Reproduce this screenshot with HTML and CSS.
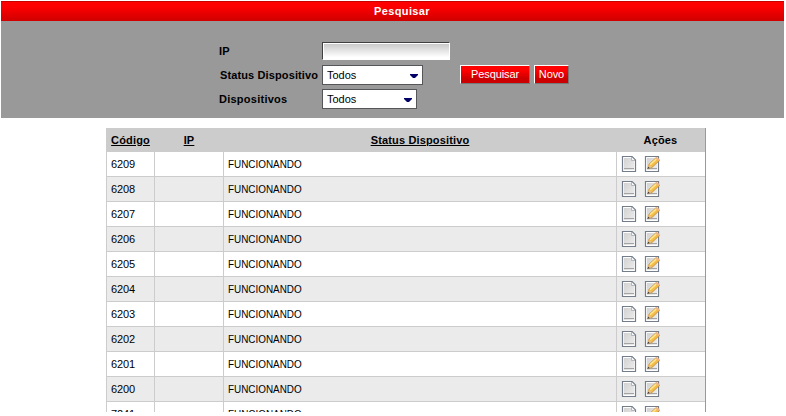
FILE: index.html
```
<!DOCTYPE html>
<html lang="pt-BR">
<head>
<meta charset="utf-8">
<title>Pesquisar</title>
<link rel="stylesheet" href="styles.css">
</head>
<body>
<svg class="defs" width="0" height="0">
  <defs>
    <linearGradient id="paper" x1="0" y1="0" x2="1" y2="1"><stop offset="0" stop-color="#d2d2d2"/><stop offset="1" stop-color="#ececec"/></linearGradient>
    <symbol id="page" viewBox="0 0 16 16">
      <path d="M1.500.500h9.500l3.500 3.500v11.500h-13z" fill="#fff" stroke="#747e8b" stroke-width="1.200"/>
      <path d="M3 2h7l3 3v9H3z" fill="url(#paper)"/>
      <path d="M10.500 1v3.500h3.500" fill="#f4f4f4" stroke="#a5abb3" stroke-width=".8"/>
      <path d="M3 12.500h10" stroke="#a4a4a4"/>
    </symbol>
    <symbol id="edit" viewBox="0 0 16 16">
      <path d="M1.500.500h13v15h-13z" fill="#fff" stroke="#747e8b" stroke-width="1.200"/>
      <path d="M3 2h10v12H3z" fill="url(#paper)"/>
      <path d="M3 12.500h10" stroke="#a4a4a4"/>
      <path d="M3.800 12.500l1.200-4.300 7.200-6.700 3.300 2.900-7.500 7z" fill="#f3bd48" stroke="#c98c35" stroke-width=".8"/>
      <path d="M6 8.800l6.700-6.200" stroke="#ffe993" stroke-width="1.500"/>
      <path d="M11.200 2.400l1.700-1.500 2.900 2.600-1.700 1.600z" fill="#f0b489"/>
      <path d="M3.800 12.500l1.100-3.700 2.700 2.500z" fill="#e4c594"/>
      <path d="M3.600 12.700l.6-2 1.500 1.300z" fill="#333"/>
    </symbol>
  </defs>
</svg>
<div class="page">
  <section class="panel">
    <h1 class="title">Pesquisar</h1>
    <form class="form">
      <div class="fields">
        <label>IP</label><span class="input"></span>
        <label class="status-label">Status Dispositivo</label><span class="select">Todos<i></i></span>
        <label>Dispositivos</label><span class="select short">Todos<i></i></span>
      </div>
      <div class="buttons"><button type="button" class="search">Pesquisar</button><button type="button" class="new">Novo</button></div>
    </form>
  </section>
  <table class="grid">
    <colgroup><col class="c-code"><col class="c-ip"><col class="c-status"><col class="c-actions"></colgroup>
    <thead><tr><th><u>Código</u></th><th><u>IP</u></th><th><u>Status Dispositivo</u></th><th>Ações</th></tr></thead>
    <tbody>
      <tr><td>6209</td><td></td><td><span class="st">FUNCIONANDO</span></td><td class="act"><svg><use href="#page"/></svg><svg><use href="#edit"/></svg></td></tr>
      <tr><td>6208</td><td></td><td><span class="st">FUNCIONANDO</span></td><td class="act"><svg><use href="#page"/></svg><svg><use href="#edit"/></svg></td></tr>
      <tr><td>6207</td><td></td><td><span class="st">FUNCIONANDO</span></td><td class="act"><svg><use href="#page"/></svg><svg><use href="#edit"/></svg></td></tr>
      <tr><td>6206</td><td></td><td><span class="st">FUNCIONANDO</span></td><td class="act"><svg><use href="#page"/></svg><svg><use href="#edit"/></svg></td></tr>
      <tr><td>6205</td><td></td><td><span class="st">FUNCIONANDO</span></td><td class="act"><svg><use href="#page"/></svg><svg><use href="#edit"/></svg></td></tr>
      <tr><td>6204</td><td></td><td><span class="st">FUNCIONANDO</span></td><td class="act"><svg><use href="#page"/></svg><svg><use href="#edit"/></svg></td></tr>
      <tr><td>6203</td><td></td><td><span class="st">FUNCIONANDO</span></td><td class="act"><svg><use href="#page"/></svg><svg><use href="#edit"/></svg></td></tr>
      <tr><td>6202</td><td></td><td><span class="st">FUNCIONANDO</span></td><td class="act"><svg><use href="#page"/></svg><svg><use href="#edit"/></svg></td></tr>
      <tr><td>6201</td><td></td><td><span class="st">FUNCIONANDO</span></td><td class="act"><svg><use href="#page"/></svg><svg><use href="#edit"/></svg></td></tr>
      <tr><td>6200</td><td></td><td><span class="st">FUNCIONANDO</span></td><td class="act"><svg><use href="#page"/></svg><svg><use href="#edit"/></svg></td></tr>
      <tr><td>7241</td><td></td><td><span class="st">FUNCIONANDO</span></td><td class="act"><svg><use href="#page"/></svg><svg><use href="#edit"/></svg></td></tr>
    </tbody>
  </table>
</div>
</body>
</html>
```
FILE: styles.css
```
* { box-sizing: border-box; }
html, body { margin: 0; height: 416px; overflow: hidden; background: #fff; }
body { font: 11px/13px "Liberation Sans", Arial, sans-serif; color: #000; }
.defs { position: absolute; }
.page { height: 412px; padding: 1px 2px 0 1px; overflow: hidden; }
.panel { height: 117px; background: #999; }
.title {
  margin: 0; height: 20px; padding-left: 19px;
  font-size: 11px; line-height: 18px; font-weight: bold; text-align: center; letter-spacing: .38px;
  color: #fff; background: linear-gradient(#f00 20%, #d00000); border-top: 1px solid #c80000;
}
.form { display: flex; padding: 18px 0 0 218px; }
.fields { display: grid; grid-template-columns: 103px 138px; grid-template-rows: repeat(3, 24px); align-items: center; }
.fields label { font-weight: bold; letter-spacing: .25px; }
.fields .status-label { padding-left: 1px; letter-spacing: .12px; }
.input {
  width: 128px; height: 18px; border: 1px solid #fff;
  border-top-color: #404040; border-left-color: #404040; background: linear-gradient(#c6c6c6, #fff 90%);
  box-shadow: inset 1px 1px #fff;
}
.select {
  display: flex; align-items: center; justify-content: space-between;
  width: 101px; height: 20px; padding: 0 4px; border: 1px solid #55565a; background: #fff;
}
.select.short { width: 95px; }
.select i { width: 8px; height: 4px; background: #000066; clip-path: polygon(0 0, 100% 0, 100% 25%, 62% 100%, 38% 100%, 0 25%); margin-top: 2px; }
.buttons { display: flex; gap: 4px; padding-top: 26px; }
.buttons button {
  height: 19px; padding: 0 0 1px; font: 11px "Liberation Sans", Arial, sans-serif; color: #fff;
  border: 1px solid #fff; border-right-color: #777; border-bottom-color: #777;
  background: linear-gradient(#f00 25%, #c00 75%); letter-spacing: -.1px;
}
.buttons .search { width: 70px; }
.buttons .new { width: 35px; }
.grid {
  width: 600px; margin: 10px 0 0 105px; table-layout: fixed; border-collapse: separate; border-spacing: 0;
  border-left: 1px solid #ccc; border-right: 1px solid #999;
}
.c-code { width: 48px; }
.c-ip { width: 69px; }
.c-status { width: 393px; }
.c-actions { width: 88px; }
.grid th { height: 24px; padding: 1px 1px 0 0; background: #ccc; letter-spacing: .15px; }
.grid td { height: 25px; padding: 0 4px; border-right: 1px solid #ccc; border-bottom: 1px solid #ccc; letter-spacing: -.1px; }
.grid td:last-child { border-right: 0; }
.grid tbody tr:nth-child(even) { background: #ebebeb; }
.grid .st { display: inline-block; letter-spacing: 0; transform: scaleX(.9); transform-origin: 0 50%; }
.grid .act { padding: 0 0 0 4px; font-size: 0; line-height: 0; }
.act svg { width: 16px; height: 16px; margin-right: 7px; vertical-align: middle; }
```
